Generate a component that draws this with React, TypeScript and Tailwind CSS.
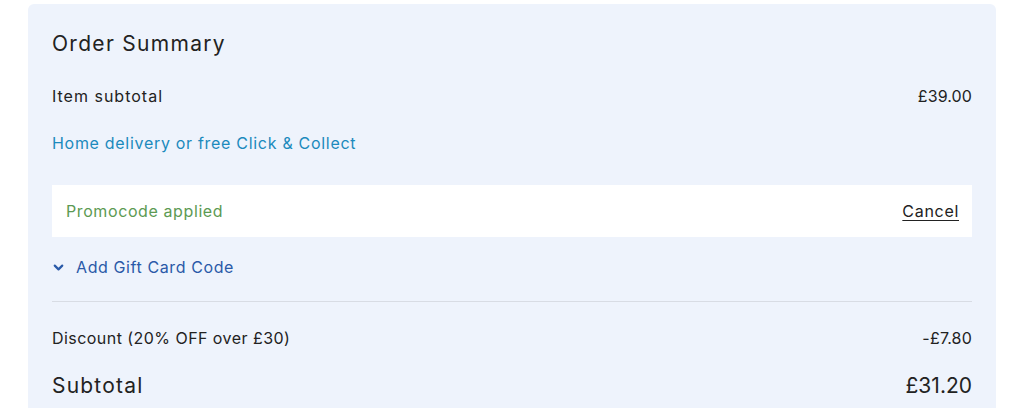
import { ChevronDown } from "lucide-react";

export default function App() {
  return (
    <div className="h-[408px] w-[1024px] overflow-hidden bg-white pl-[28px] pr-[28px] pt-[4px]" style={{ fontFamily: "Inter, 'Noto Sans', sans-serif" }}>
      <div className="rounded-md bg-[#eef3fc] px-6 pt-[26px] pb-6 text-[#222]">
        <h2 className="text-[21px] leading-[28px] tracking-[1.3px]">Order Summary</h2>
        <div className="mt-[28px] flex items-center justify-between text-[16px] leading-[20px]">
          <span className="tracking-[1px]">Item subtotal</span>
          <span className="tracking-[0.1px]">£39.00</span>
        </div>
        <div className="mt-[27px] text-[16px] leading-[20px] text-[#1b8abd] tracking-[0.7px]">Home delivery or free Click &amp; Collect</div>
        <div className="mt-[32px] flex h-[52px] items-center justify-between bg-white px-[14px] text-[16px] tracking-[0.6px]">
          <span className="text-[#5c9a53]">Promocode applied</span>
          <span className="underline underline-offset-[3px] tracking-[0.7px] mr-[-1px]">Cancel</span>
        </div>
        <div className="mt-[20px] flex items-center gap-[10px] text-[16px] leading-[20px] tracking-[0.6px] text-[#2a5aa8]">
          <ChevronDown className="ml-[-1px] h-[15px] w-[15px]" strokeWidth={3.5} />
          <span>Add Gift Card Code</span>
        </div>
        <div className="mt-[24px] h-px bg-[#d8dce4]" />
        <div className="mt-[26px] flex items-center justify-between text-[16px] leading-[20px]">
          <span className="tracking-[0.45px]">Discount (20% OFF over £30)</span>
          <span className="tracking-[0.2px]">-£7.80</span>
        </div>
        <div className="mt-[24px] flex items-center justify-between text-[21px] leading-[28px]">
          <span className="tracking-[1.2px]">Subtotal</span>
          <span>£31.20</span>
        </div>
      </div>
    </div>
  );
}
